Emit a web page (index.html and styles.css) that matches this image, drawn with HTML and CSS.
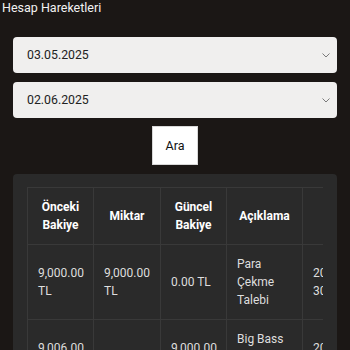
FILE: index.html
```html
<!DOCTYPE html>
<html lang="tr">
<head>
    <meta charset="UTF-8">
    <title>Hesap Hareketleri</title>
    <link rel="stylesheet" href="styles.css">
</head>
<body>
    <div class="page">
        <h1 class="title">Hesap Hareketleri</h1>
        <div class="filters">
            <div class="selectBox">
                <select>
                    <option>03.05.2025</option>
                </select>
                <svg class="chevron" width="8" height="5" viewBox="0 0 8 5"><path d="M0.5 0.5 L4 4 L7.5 0.5" fill="none" stroke="#7a7a7a" stroke-width="1"/></svg>
            </div>
            <div class="selectBox">
                <select>
                    <option>02.06.2025</option>
                </select>
                <svg class="chevron" width="8" height="5" viewBox="0 0 8 5"><path d="M0.5 0.5 L4 4 L7.5 0.5" fill="none" stroke="#7a7a7a" stroke-width="1"/></svg>
            </div>
            <div class="btnRow">
                <button class="searchBtn">Ara</button>
            </div>
        </div>
        <div class="card">
            <div class="tableWrap">
                <table>
                    <colgroup>
                        <col class="c1">
                        <col class="c2">
                        <col class="c3">
                        <col class="c4">
                        <col class="c5">
                    </colgroup>
                    <thead>
                        <tr>
                            <th>Önceki Bakiye</th>
                            <th>Miktar</th>
                            <th>Güncel Bakiye</th>
                            <th>Açıklama</th>
                            <th>Tarih</th>
                        </tr>
                    </thead>
                    <tbody>
                        <tr>
                            <td>9,000.00 TL</td>
                            <td>9,000.00 TL</td>
                            <td>0.00 TL</td>
                            <td>Para Çekme Talebi</td>
                            <td>2025-06-02 30:14</td>
                        </tr>
                        <tr>
                            <td>9,006.00 TL</td>
                            <td>6.00 TL</td>
                            <td>9,000.00 TL</td>
                            <td>Big Bass Bonanza Kazanç</td>
                            <td>2025-06-01 22:10</td>
                        </tr>
                    </tbody>
                </table>
            </div>
        </div>
    </div>
</body>
</html>
```

FILE: styles.css
```css
*{
    margin: 0;
    padding: 0;
    box-sizing: border-box;
}
body{
    background: #1b1715;
    font-family: Roboto, "Liberation Sans", sans-serif;
    color: #fff;
}
.page{
    width: 350px;
}
.title{
    font-size: 12.5px;
    font-weight: normal;
    line-height: 16px;
    padding-left: 2px;
    color: #f2f2f2;
}
.filters{
    padding: 21px 13px 0;
}
.selectBox{
    position: relative;
    height: 36px;
    margin-bottom: 9px;
}
.selectBox select{
    appearance: none;
    -webkit-appearance: none;
    width: 100%;
    height: 36px;
    border: none;
    border-radius: 4px;
    background: #f0efee;
    color: #222;
    font-family: Roboto, "Liberation Sans", sans-serif;
    font-size: 12.3px;
    padding-left: 14px;
    outline: none;
}
.chevron{
    position: absolute;
    right: 7px;
    top: 16px;
}
.btnRow{
    display: flex;
    justify-content: center;
    margin-top: -1px;
}
.searchBtn{
    width: 46px;
    height: 39px;
    background: #fff;
    border: 1px solid #d8d8d8;
    color: #111;
    font-family: Roboto, "Liberation Sans", sans-serif;
    font-size: 12.5px;
    cursor: pointer;
}
.card{
    margin: 9px 13px 0;
    background: #2a2a2a;
    border-radius: 4px;
    padding: 13px 14px 20px;
}
.tableWrap{
    overflow: hidden;
}
table{
    border-collapse: collapse;
    table-layout: fixed;
    width: 385px;
    font-size: 12px;
    line-height: 18px;
}
.c1{ width: 66px; }
.c2{ width: 67px; }
.c3{ width: 66px; }
.c4{ width: 76px; }
.c5{ width: 110px; }
th,td{
    border: 1px solid #393939;
    padding: 10px;
    vertical-align: middle;
}
th{
    font-weight: bold;
    color: #fff;
    text-align: center;
    padding: 10px 6px;
}
td{
    color: #dedede;
    text-align: left;
}
```
